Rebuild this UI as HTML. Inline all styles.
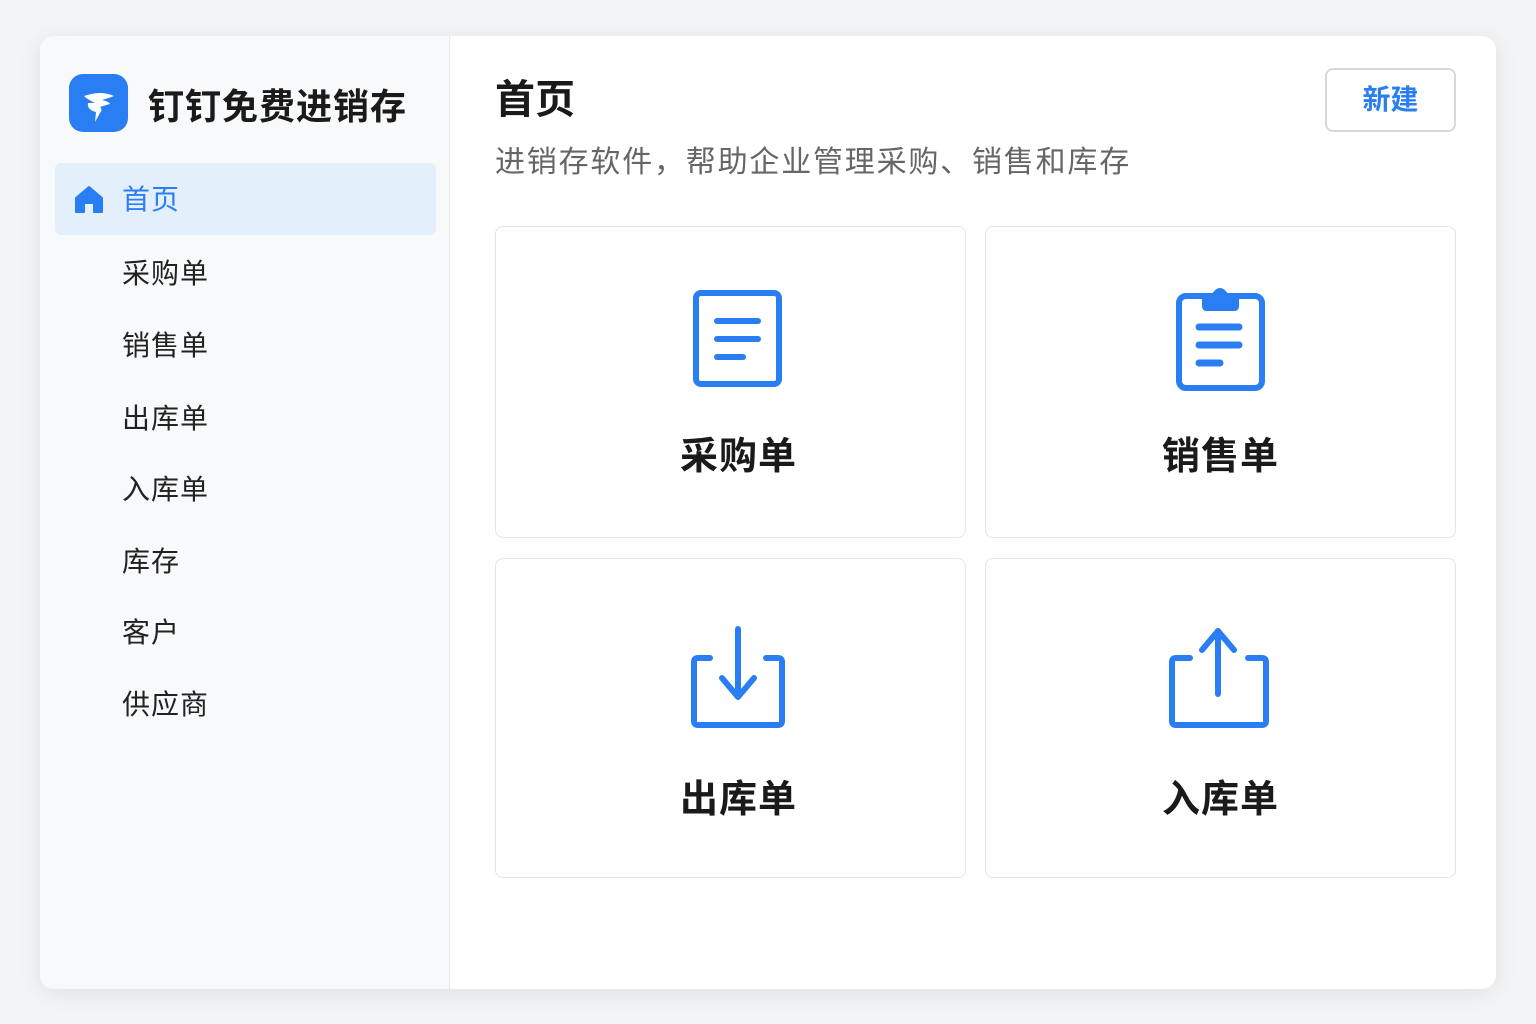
<!DOCTYPE html>
<html><head><meta charset="utf-8"><style>
*{margin:0;padding:0;box-sizing:border-box}
body{width:1536px;height:1024px;background:#f3f4f5;font-family:"Liberation Sans","Noto Sans CJK SC",sans-serif;position:relative;overflow:hidden}
.win{position:absolute;left:40px;top:36px;width:1456px;height:953px;background:#fff;border-radius:14px;box-shadow:0 4px 24px rgba(0,0,0,.08);overflow:hidden}
.side{position:absolute;left:0;top:0;width:410px;height:953px;background:#f7f9fa;border-right:1px solid #e6e8ea}
.logo{position:absolute;left:29px;top:38px;width:59px;height:58px;background:#2a7ef4;border-radius:14px}
.brand{position:absolute;left:108px;top:42px;font-size:36px;font-weight:bold;color:#1a1a1a;letter-spacing:1px}
.active{position:absolute;left:15px;top:127px;width:381px;height:72px;background:#e4effc;border-radius:6px}
.it{position:absolute;left:82px;font-size:28px;color:#222;line-height:36px;letter-spacing:1px}
.title{position:absolute;left:455px;top:40px;font-size:40px;font-weight:bold;color:#1a1a1a;line-height:48px}
.sub{position:absolute;left:455px;top:108px;font-size:30px;color:#666;line-height:38px;letter-spacing:1.8px}
.btn{position:absolute;left:1285px;top:32px;width:131px;height:64px;border:2px solid #d6d9dc;border-radius:8px;color:#2a7ef4;font-size:28px;font-weight:bold;text-align:center;line-height:60px}
.card{position:absolute;width:471px;border:1.5px solid #e3e5e7;border-radius:8px;background:#fff}
.lbl{position:absolute;left:0;width:100%;text-align:center;font-size:38px;font-weight:600;color:#1a1a1a;letter-spacing:1px}
svg{position:absolute}
</style></head><body>
<div class="win">
<div class="side">
<div class="logo"><svg width="59" height="58" viewBox="0 0 59 58"><path d="M15 22 C24 19 34 17 45 22 C40 24 36 25 33 26 C37 27 40 28 41 30 C37 31 34 32 31 33 C33 35 33 37 31 39 L26 48 L27 38 C22 37 18 34 19 29 C22 29 24 29 26 29 C22 27 18 25 15 22Z" fill="#fff"/></svg></div>
<div class="brand">钉钉免费进销存</div>
<div class="active"></div>
<svg style="left:34px;top:148px" width="30" height="30" viewBox="0 0 30 30"><path d="M15 3 L28 14 L28 28 L20 28 L20 19 L10 19 L10 28 L2 28 L2 14Z" fill="#2a7ef4" stroke="#2a7ef4" stroke-width="2" stroke-linejoin="round"/></svg>
<div class="it" style="top:146px;color:#2a7ef4">首页</div>
<div class="it" style="top:220px">采购单</div>
<div class="it" style="top:292px">销售单</div>
<div class="it" style="top:365px">出库单</div>
<div class="it" style="top:436px">入库单</div>
<div class="it" style="top:508px">库存</div>
<div class="it" style="top:579px">客户</div>
<div class="it" style="top:651px">供应商</div>
</div>
<div class="title">首页</div>
<div class="sub">进销存软件，帮助企业管理采购、销售和库存</div>
<div class="btn">新建</div>
<div class="card" style="left:455px;top:190px;height:312px"><div class="lbl" style="top:198px;padding-left:16px">采购单</div></div>
<div class="card" style="left:945px;top:190px;height:312px"><div class="lbl" style="top:198px">销售单</div></div>
<div class="card" style="left:455px;top:522px;height:320px"><div class="lbl" style="top:209px;padding-left:16px">出库单</div></div>
<div class="card" style="left:945px;top:522px;height:320px"><div class="lbl" style="top:209px">入库单</div></div>
<svg style="left:650px;top:252px" width="96" height="100" viewBox="0 0 96 100"><rect x="6" y="5" width="83" height="91" rx="5" fill="none" stroke="#2a7ef4" stroke-width="6"/><g stroke="#2a7ef4" stroke-width="6" stroke-linecap="round"><line x1="27" y1="33" x2="68" y2="33"/><line x1="27" y1="51" x2="68" y2="51"/><line x1="27" y1="69" x2="53" y2="69"/></g></svg>
<svg style="left:1132px;top:250px" width="96" height="106" viewBox="0 0 96 106"><rect x="7" y="10" width="83" height="92" rx="7" fill="none" stroke="#2a7ef4" stroke-width="6"/><path d="M30 10 L30 20 Q30 25 35 25 L62 25 Q67 25 67 20 L67 10 L57 10 Q53 2 48 2 Q43 2 39 10Z" fill="#2a7ef4"/><g stroke="#2a7ef4" stroke-width="7" stroke-linecap="round"><line x1="27" y1="41" x2="67" y2="41"/><line x1="27" y1="59" x2="67" y2="59"/><line x1="27" y1="77" x2="48" y2="77"/></g></svg>
<svg style="left:648px;top:585px" width="100" height="110" viewBox="0 0 100 110"><g fill="none" stroke="#2a7ef4" stroke-width="6" stroke-linecap="round" stroke-linejoin="round"><path d="M22 37 L10 37 Q6 37 6 41 L6 100 Q6 104 10 104 L90 104 Q94 104 94 100 L94 41 Q94 37 90 37 L78 37"/><line x1="50" y1="8" x2="50" y2="73"/><path d="M34 57 L50 76 L66 57"/></g></svg>
<svg style="left:1126px;top:585px" width="106" height="110" viewBox="0 0 106 110"><g fill="none" stroke="#2a7ef4" stroke-width="6" stroke-linecap="round" stroke-linejoin="round"><path d="M24 37 L10 37 Q6 37 6 41 L6 100 Q6 104 10 104 L96 104 Q100 104 100 100 L100 41 Q100 37 96 37 L82 37"/><line x1="52" y1="10" x2="52" y2="73"/><path d="M36 29 L52 10 L68 29"/></g></svg>
</div>
</body></html>
